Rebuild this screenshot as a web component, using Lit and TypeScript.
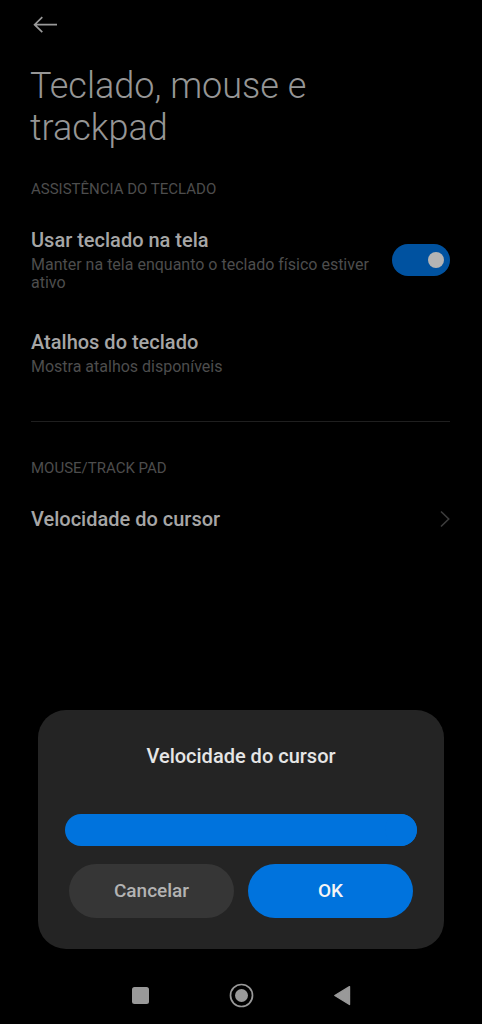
import { LitElement, html, css } from "lit";
import { customElement, state } from "lit/decorators.js";

@customElement("setting-row")
class SettingRow extends LitElement {
  static styles = css`
    :host {
      display: flex;
      align-items: center;
      justify-content: space-between;
      gap: 18px;
      padding: 19px 0;
    }
    .text {
      display: flex;
      flex-direction: column;
      gap: 4px;
      min-width: 0;
    }
    ::slotted(*) {
      flex: none;
    }
  `;

  render() {
    return html`
      <div class="text"><slot name="title"></slot><slot name="note"></slot></div>
      <slot></slot>
    `;
  }
}

@customElement("app-root")
class AppRoot extends LitElement {
  @state() private onScreen = true;
  @state() private speed = 100;

  static styles = css`
    :host {
      display: flex;
      flex-direction: column;
      min-height: 100vh;
      box-sizing: border-box;
      background: #000;
      color: #a6a6a6;
      font-family: Roboto, "Liberation Sans", sans-serif;
    }
    button {
      border: 0;
      padding: 0;
      background: none;
      color: inherit;
      font: inherit;
      text-align: left;
      cursor: pointer;
    }
    svg {
      display: block;
    }
    .bar {
      display: flex;
      padding: 12px 32px;
    }
    .content {
      padding: 16px 32px 0 31px;
    }
    h1 {
      margin: 0 0 31px -1px;
      font-size: 36px;
      line-height: 42px;
      font-weight: 300;
      color: #969696;
    }
    h2 {
      margin: 0 0 11px;
      font-size: 15px;
      line-height: 18px;
      font-weight: 400;
      color: #4d4d4d;
    }
    .name {
      display: block;
      font-size: 20px;
      line-height: 24px;
      font-weight: 500;
    }
    .note {
      font-size: 16px;
      line-height: 18px;
      color: #4d4d4d;
    }
    .switch {
      appearance: none;
      display: flex;
      align-items: center;
      justify-content: flex-end;
      box-sizing: border-box;
      width: 58px;
      height: 32px;
      margin: 0;
      padding: 0 6px;
      border-radius: 16px;
      background: #0052a0;
    }
    .switch::before {
      content: "";
      width: 16px;
      height: 16px;
      border-radius: 50%;
      background: #b4b4b4;
    }
    .switch:not(:checked) {
      justify-content: flex-start;
      background: #333;
    }
    hr {
      height: 1px;
      margin: 26px 0 37px;
      border: 0;
      background: #1f1f1f;
    }
    .dialog {
      margin: auto 38px 0;
      padding: 34px 27px 31px;
      border-radius: 28px;
      background: #242424;
    }
    .dialog-title {
      display: block;
      margin-bottom: 46px;
      text-align: center;
      font-size: 20px;
      line-height: 24px;
      font-weight: 500;
      color: #e6e6e6;
    }
    .slider {
      appearance: none;
      display: block;
      width: 100%;
      height: 32px;
      margin: 0;
      border-radius: 16px;
      overflow: hidden;
      background: linear-gradient(#0073dd, #0073dd) no-repeat #363636;
    }
    .slider::-webkit-slider-thumb {
      appearance: none;
      width: 32px;
      height: 32px;
      border-radius: 16px;
      background: #0073dd;
    }
    .actions {
      display: grid;
      grid-template-columns: 1fr 1fr;
      gap: 14px;
      padding: 18px 4px 0;
    }
    .action {
      height: 54px;
      border-radius: 27px;
      background: #363636;
      color: #b3b3b3;
      font-size: 19px;
      line-height: 24px;
      font-weight: 500;
      text-align: center;
    }
    .primary {
      background: #0073dd;
      color: #f5f5f5;
    }
    .nav {
      display: flex;
      justify-content: center;
      gap: 76px;
      padding: 34px 0 16px;
    }
  `;

  render() {
    return html`
      <header class="bar">
        <button aria-label="Voltar">
          <svg width="26" height="25" viewBox="0 0 26 25" fill="none" stroke="#999" stroke-width="1.7">
            <path d="M25 12.7H2.5M10.3 5.2L2.6 12.7l7.7 7.5" />
          </svg>
        </button>
      </header>
      <main class="content">
        <h1>Teclado, mouse e trackpad</h1>
        <h2>ASSISTÊNCIA DO TECLADO</h2>
        <setting-row>
          <label class="name" slot="title" for="on-screen">Usar teclado na tela</label>
          <span class="note" slot="note" id="note">Manter na tela enquanto o teclado físico estiver ativo</span>
          <input
            class="switch"
            id="on-screen"
            type="checkbox"
            role="switch"
            aria-describedby="note"
            .checked=${this.onScreen}
            @change=${(e: Event) => (this.onScreen = (e.target as HTMLInputElement).checked)}
          />
        </setting-row>
        <setting-row>
          <button class="name" slot="title">Atalhos do teclado</button>
          <span class="note" slot="note">Mostra atalhos disponíveis</span>
        </setting-row>
        <hr />
        <h2>MOUSE/TRACK PAD</h2>
        <setting-row>
          <button class="name" slot="title">Velocidade do cursor</button>
          <svg width="10" height="18" viewBox="0 0 10 18" fill="none" stroke="#3c3c3c" stroke-width="1.6">
            <path d="M1 1.5L8.7 9 1 16.5" />
          </svg>
        </setting-row>
      </main>
      <section class="dialog" role="dialog" aria-labelledby="speed-label">
        <label class="dialog-title" id="speed-label" for="speed">Velocidade do cursor</label>
        <input
          class="slider"
          id="speed"
          type="range"
          min="0"
          max="100"
          .value=${String(this.speed)}
          style="background-size: ${this.speed}% 100%"
          @input=${(e: Event) => (this.speed = Number((e.target as HTMLInputElement).value))}
        />
        <div class="actions">
          <button class="action">Cancelar</button>
          <button class="action primary">OK</button>
        </div>
      </section>
      <nav class="nav">
        <button aria-label="Recentes">
          <svg width="25" height="25" viewBox="0 0 25 25" fill="#999">
            <rect x="4" y="4" width="17" height="17" rx="2.5" />
          </svg>
        </button>
        <button aria-label="Início">
          <svg width="25" height="25" viewBox="0 0 25 25" fill="#999">
            <circle cx="12.5" cy="12.5" r="11" fill="none" stroke="#999" stroke-width="1.7" />
            <circle cx="12.5" cy="12.5" r="6.5" />
          </svg>
        </button>
        <button aria-label="Voltar">
          <svg width="25" height="25" viewBox="0 0 25 25" fill="#999" stroke="#999" stroke-width="1.4" stroke-linejoin="round">
            <path d="M4.8 12.5L19.5 3.7v17.8z" />
          </svg>
        </button>
      </nav>
    `;
  }
}
